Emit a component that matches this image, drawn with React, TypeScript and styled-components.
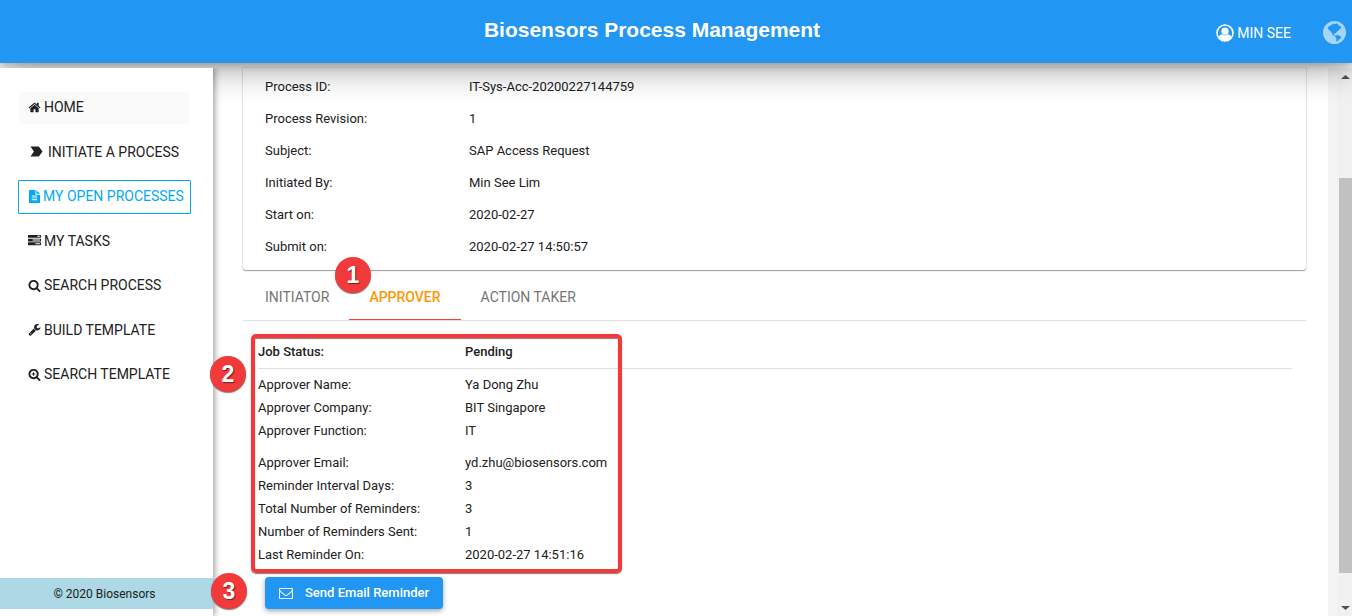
import React from "react";
import styled, { createGlobalStyle } from "styled-components";
import { MdLabelImportant } from "react-icons/md";

const arial = `"Liberation Sans", Arial, sans-serif`;
const roboto = `Roboto, "Liberation Sans", sans-serif`;

const GlobalStyle = createGlobalStyle`
  *, *::before, *::after { box-sizing: border-box; }
  body { margin: 0; background: #fff; color: #212121; font-family: ${roboto}; font-size: 13px; }
  h1, ul, dl, dd { margin: 0; padding: 0; }
`;

const Page = styled.div`
  position: relative;
  display: flex;
  flex-direction: column;
  height: 100vh;
  min-height: 616px;
  overflow: hidden;
`;

const Header = styled.header`
  position: relative;
  z-index: 1;
  flex: none;
  display: grid;
  grid-template-columns: 1fr auto 1fr;
  align-items: center;
  height: 63px;
  padding: 0 6px;
  background: #2196f3;
  color: #fff;
  box-shadow: 0 5px 34px rgba(0, 0, 0, 0.4), 0 2px 8px rgba(0, 0, 0, 0.2);
`;

const Title = styled.h1`
  grid-column: 2;
  margin-right: 48px;
  padding-bottom: 4px;
  font: bold 21px/26px ${arial};
`;

const HeaderTools = styled.div`
  display: flex;
  justify-content: flex-end;
  align-items: center;
  gap: 32px;
`;

const HeaderButton = styled.button`
  display: flex;
  align-items: center;
  gap: 3px;
  padding: 2px 0 0;
  border: 0;
  background: none;
  color: #fff;
  font: 14px/20px ${roboto};
`;

const Body = styled.div`
  flex: 1;
  display: flex;
  min-height: 0;
  padding-top: 5px;
`;

const Sidebar = styled.aside`
  position: relative;
  z-index: 2;
  flex: none;
  display: flex;
  flex-direction: column;
  justify-content: space-between;
  width: 213px;
  padding: 23px 0 7px;
  background: #fff;
  box-shadow: 2px 0 6px rgba(0, 0, 0, 0.36);
  clip-path: inset(0 -12px 0 0);
`;

const NavList = styled.ul`
  display: flex;
  flex-direction: column;
  justify-content: space-between;
  height: 301px;
  padding: 0 22px 0 18px;
  list-style: none;
`;

const NavLink = styled.a<{ $state?: "hover" | "active"; $gap: number }>`
  display: flex;
  align-items: center;
  gap: ${(p) => p.$gap}px;
  height: 34px;
  padding: 0 5px 2px 9px;
  border: 1px solid ${(p) => (p.$state === "active" ? "#03a9f4" : "transparent")};
  border-radius: 1px;
  background: ${(p) => (p.$state === "hover" ? "#fafafa" : "transparent")};
  background-clip: padding-box;
  color: ${(p) => (p.$state === "active" ? "#03a9f4" : "#212121")};
  font: 14px/20px ${roboto};
  text-decoration: none;
  white-space: nowrap;

  svg { flex: none; }
`;

const Copyright = styled.footer`
  height: 31px;
  padding: 1px 4px 0 0;
  background: #add8e6;
  font-size: 12px;
  line-height: 30px;
  text-align: center;
`;

const Main = styled.main`
  flex: 1;
  min-width: 0;
  padding: 0 22px 0 30px;
`;

const Card = styled.section`
  padding: 3px 22px 7px;
  border-radius: 0 0 3px 3px;
  box-shadow: 0 0 1px 1px rgba(0, 0, 0, 0.08), 0 1px 1px rgba(0, 0, 0, 0.35);
`;

const Details = styled.dl<{ $row: number; $label: number }>`
  display: grid;
  grid-template-columns: ${(p) => p.$label}px 1fr;
  grid-auto-rows: ${(p) => p.$row}px;
  align-items: center;
  line-height: 20px;
`;

const Tabs = styled.div`
  display: flex;
  height: 51px;
  padding-left: 2px;
  border-bottom: 1px solid #e0e0e0;
`;

const Tab = styled.button<{ $active?: boolean }>`
  padding: 5px 20px 0;
  border: 0;
  border-bottom: 1px solid ${(p) => (p.$active ? "#f44336" : "transparent")};
  background: none;
  color: ${(p) => (p.$active ? "#ff9800" : "#757575")};
  font: ${(p) => (p.$active ? 500 : 400)} 14px/20px ${roboto};
`;

const Panel = styled.section`
  padding: 15px 14px 0 15px;
`;

const Status = styled(Details)`
  height: 33px;
  border-bottom: 1px solid #e0e0e0;
  font-weight: 500;
`;

const Group = styled(Details)`
  padding-top: 4px;
  & + & { padding-top: 9px; }
`;

const SendButton = styled.button`
  display: flex;
  align-items: center;
  gap: 12px;
  height: 32px;
  margin: 11px 0 0 7px;
  padding: 0 14px;
  border: 0;
  border-radius: 4px;
  background: #2196f3;
  color: #fff;
  font: 500 13px/20px ${roboto};
  box-shadow: 0 2px 5px rgba(0, 0, 0, 0.35);
`;

const Scroller = styled.div`
  flex: none;
  display: flex;
  flex-direction: column;
  align-items: center;
  width: 24px;
  padding: 7px 0 6px 2px;
  border-left: 9px solid #f4f4f4;
  background: #f1f1f1;
`;

const ScrollThumb = styled.div`
  width: 13px;
  height: 395px;
  margin: 99px 0 auto;
  background: #c1c1c1;
`;

const Badge = styled.span<{ $x: number; $y: number }>`
  position: absolute;
  z-index: 3;
  left: ${(p) => p.$x}px;
  top: ${(p) => p.$y}px;
  width: 36px;
  height: 36px;
  border-radius: 50%;
  background: #f23a3a;
  color: #fff;
  font: bold 23px/36px ${arial};
  text-align: center;
  text-shadow: 1px 1px 1px rgba(0, 0, 0, 0.5);
  box-shadow: 0 1px 1px rgba(0, 0, 0, 0.5);
`;

const Highlight = styled.div`
  position: absolute;
  z-index: 3;
  left: 251px;
  top: 334px;
  width: 371px;
  height: 239px;
  border: 4px solid #f23a3a;
  border-radius: 5px;
  box-shadow: 0 1px 1px rgba(0, 0, 0, 0.5), inset 0 1px 1px rgba(0, 0, 0, 0.5);
  pointer-events: none;
`;

const lens =
  "M1216 832q0-185-131.5-316.5t-316.5-131.5-316.5 131.5-131.5 316.5 131.5 316.5 316.5 131.5 316.5-131.5 131.5-316.5zm512 832q0 52-38 90t-90 38q-54 0-90-38l-343-342q-179 124-399 124-143 0-273.5-55.5t-225-150-150-225-55.5-273.5 55.5-273.5 150-225 225-150 273.5-55.5 273.5 55.5 225 150 150 225 55.5 273.5q0 220-124 399l343 343q37 37 37 90z";

const paths = {
  home: "M1472 992v480q0 26-19 45t-45 19h-384v-384h-256v384h-384q-26 0-45-19t-19-45v-480q0-1 .5-3t.5-3l575-474 575 474q1 2 1 6zm223-69l-62 74q-8 9-21 11h-3q-13 0-21-7l-692-577-692 577q-12 8-24 7-13-2-21-11l-62-74q-8-10-7-23.5t11-21.5l719-599q32-26 76-26t76 26l244 204v-195q0-14 9-23t23-9h192q14 0 23 9t9 23v408l219 182q10 8 11 21.5t-7 23.5z",
  file: "M1596 476q14 14 28 36h-472v-472q22 14 36 28zm-476 164h544v1056q0 40-28 68t-68 28h-1344q-40 0-68-28t-28-68v-1600q0-40 28-68t68-28h800v544q0 40 28 68t68 28zm160 736v-64q0-14-9-23t-23-9h-704q-14 0-23 9t-9 23v64q0 14 9 23t23 9h704q14 0 23-9t9-23zm0-256v-64q0-14-9-23t-23-9h-704q-14 0-23 9t-9 23v64q0 14 9 23t23 9h704q14 0 23-9t9-23zm0-256v-64q0-14-9-23t-23-9h-704q-14 0-23 9t-9 23v64q0 14 9 23t23 9h704q14 0 23-9t9-23z",
  tasks: "M1024 1408h640v-128h-640v128zm-384-512h1024v-128h-1024v128zm640-512h384v-128h-384v128zm512 832v256q0 26-19 45t-45 19h-1664q-26 0-45-19t-19-45v-256q0-26 19-45t45-19h1664q26 0 45 19t19 45zm0-512v256q0 26-19 45t-45 19h-1664q-26 0-45-19t-19-45v-256q0-26 19-45t45-19h1664q26 0 45 19t19 45zm0-512v256q0 26-19 45t-45 19h-1664q-26 0-45-19t-19-45v-256q0-26 19-45t45-19h1664q26 0 45 19t19 45z",
  search: lens,
  searchPlus:
    lens +
    "M1024 800v64q0 13-9.5 22.5t-22.5 9.5h-160v160q0 13-9.5 22.5t-22.5 9.5h-64q-13 0-22.5-9.5t-9.5-22.5v-160h-160q-13 0-22.5-9.5t-9.5-22.5v-64q0-13 9.5-22.5t22.5-9.5h160v-160q0-13 9.5-22.5t22.5-9.5h64q13 0 22.5 9.5t9.5 22.5v160h160q13 0 22.5 9.5t9.5 22.5z",
  wrench: "M448 1472q0-26-19-45t-45-19-45 19-19 45 19 45 45 19 45-19 19-45zm644-420l-682 682q-37 37-90 37-52 0-91-37l-106-108q-38-36-38-90 0-53 38-91l681-681q39 98 114.5 173.5t173.5 114.5zm634-435q0 39-23 106-47 134-164.5 217.5t-258.5 83.5q-185 0-316.5-131.5t-131.5-316.5 131.5-316.5 316.5-131.5q58 0 121.5 16.5t107.5 46.5q16 11 16 28t-16 28l-293 169v224l193 107q5-3 79-48.5t135.5-81 70.5-35.5q15 0 23.5 10t8.5 25z",
  mail: "M1664 1504v-768q-32 36-69 66-268 206-426 338-51 43-83 67t-86.5 48.5-102.5 24.5h-2q-48 0-102.5-24.5t-86.5-48.5-83-67q-158-132-426-338-37-30-69-66v768q0 13 9.5 22.5t22.5 9.5h1472q13 0 22.5-9.5t9.5-22.5zm0-1051v-24.5l-.5-13-3-12.5-5.5-9-9-7.5-14-2.5h-1472q-13 0-22.5 9.5t-9.5 22.5q0 168 147 284 193 152 401 317 6 5 35 29.5t46 37.5 44.5 31.5 50.5 27.5 43 9h2q20 0 43-9t50.5-27.5 44.5-31.5 46-37.5 35-29.5q208-165 401-317 54-43 100.5-115.5t46.5-131.5zm128-37v1088q0 66-47 113t-113 47h-1472q-66 0-113-47t-47-113v-1088q0-66 47-113t113-47h1472q66 0 113 47t47 113z",
};

const Glyph = ({ name, size = 14 }: { name: keyof typeof paths; size?: number }) => (
  <svg width={size} height={size} viewBox="0 0 1792 1792" fill="currentColor" aria-hidden="true">
    <path d={paths[name]} fillRule={name === "file" ? "evenodd" : "nonzero"} />
  </svg>
);

const UserIcon = () => (
  <svg width="18" height="18" viewBox="0 0 18 18" aria-hidden="true">
    <circle cx="9" cy="9" r="8" fill="none" stroke="#fff" strokeWidth="1.6" />
    <circle cx="9" cy="7.200" r="3.600" fill="#fff" />
    <path d="M2.500 14c.6-2.400 1.800-3.600 3.600-3.800 1.800 1.400 4 1.400 5.800 0 1.800.2 3 1.400 3.600 3.800-3.400 4-9.600 4-13 0z" fill="#fff" />
  </svg>
);

const GlobeIcon = () => (
  <svg width="23" height="23" viewBox="0 0 22 22" fill="#fff" opacity="0.6" aria-hidden="true">
    <path
      fillRule="evenodd"
      d="M11 0a11 11 0 1 1 0 22 11 11 0 0 1 0-22zM4.500 7l.8-1.800L7.500 4l2.200-1.400 1.600.6 1.200-.9 2 .5-.2 1.300 2.200.6 1.200 2.300-1.700.4-1.200 2-1.800.8-.6 1.500-2.200.2.400 1.400 1.600.8-.8.7-2-1.500-1.800-3.300-1.800-1.200zM12.200 13.800l2-.4 3.200 1.700-.6 1.800-1.600.8-1.400 2-1.200-.4.300-2.400-1.100-1.500z"
    />
  </svg>
);

const navItems: { label: string; icon: React.ReactNode; gap: number; state?: "hover" | "active" }[] = [
  { label: "HOME", icon: <Glyph name="home" size={13} />, gap: 3, state: "hover" },
  { label: "INITIATE A PROCESS", icon: <MdLabelImportant size={17} />, gap: 3 },
  { label: "MY OPEN PROCESSES", icon: <Glyph name="file" size={13} />, gap: 2, state: "active" },
  { label: "MY TASKS", icon: <Glyph name="tasks" size={13} />, gap: 3 },
  { label: "SEARCH PROCESS", icon: <Glyph name="search" size={13} />, gap: 3 },
  { label: "BUILD TEMPLATE", icon: <Glyph name="wrench" size={13} />, gap: 3 },
  { label: "SEARCH TEMPLATE", icon: <Glyph name="searchPlus" size={13} />, gap: 3 },
];

const processRows = [
  ["Process ID:", "IT-Sys-Acc-20200227144759"],
  ["Process Revision:", "1"],
  ["Subject:", "SAP Access Request"],
  ["Initiated By:", "Min See Lim"],
  ["Start on:", "2020-02-27"],
  ["Submit on:", "2020-02-27 14:50:57"],
];

const approverRows = [
  ["Approver Name:", "Ya Dong Zhu"],
  ["Approver Company:", "BIT Singapore"],
  ["Approver Function:", "IT"],
];

const reminderRows = [
  ["Approver Email:", "yd.zhu@biosensors.com"],
  ["Reminder Interval Days:", "3"],
  ["Total Number of Reminders:", "3"],
  ["Number of Reminders Sent:", "1"],
  ["Last Reminder On:", "2020-02-27 14:51:16"],
];

const Rows = ({ rows }: { rows: string[][] }) => (
  <>
    {rows.map(([label, value]) => (
      <React.Fragment key={label}>
        <dt>{label}</dt>
        <dd>{value}</dd>
      </React.Fragment>
    ))}
  </>
);

export default function App() {
  return (
    <Page>
      <GlobalStyle />
      <Header>
        <Title>Biosensors Process Management</Title>
        <HeaderTools>
          <HeaderButton>
            <UserIcon />
            MIN SEE
          </HeaderButton>
          <HeaderButton aria-label="Language">
            <GlobeIcon />
          </HeaderButton>
        </HeaderTools>
      </Header>
      <Body>
        <Sidebar>
          <nav>
            <NavList>
              {navItems.map((item) => (
                <li key={item.label}>
                  <NavLink href="#" $state={item.state} $gap={item.gap}>
                    {item.icon}
                    {item.label}
                  </NavLink>
                </li>
              ))}
            </NavList>
          </nav>
          <Copyright>© 2020 Biosensors</Copyright>
        </Sidebar>
        <Main>
          <Card>
            <Details $row={32} $label={204}>
              <Rows rows={processRows} />
            </Details>
          </Card>
          <Tabs role="tablist">
            <Tab role="tab">INITIATOR</Tab>
            <Tab role="tab" aria-selected $active>
              APPROVER
            </Tab>
            <Tab role="tab">ACTION TAKER</Tab>
          </Tabs>
          <Panel>
            <Status $row={32} $label={207}>
              <Rows rows={[["Job Status:", "Pending"]]} />
            </Status>
            <Group $row={23} $label={207}>
              <Rows rows={approverRows} />
            </Group>
            <Group $row={23} $label={207}>
              <Rows rows={reminderRows} />
            </Group>
            <SendButton>
              <Glyph name="mail" />
              Send Email Reminder
            </SendButton>
          </Panel>
        </Main>
        <Scroller>
          <svg width="9" height="4" viewBox="0 0 9 4" fill="#505050" aria-hidden="true">
            <path d="M4.500 0 9 4H0z" />
          </svg>
          <ScrollThumb />
          <svg width="9" height="4" viewBox="0 0 9 4" fill="#505050" aria-hidden="true">
            <path d="M0 0h9L4.500 4z" />
          </svg>
        </Scroller>
      </Body>
      <Highlight />
      <Badge $x={335} $y={257}>1</Badge>
      <Badge $x={210} $y={356}>2</Badge>
      <Badge $x={211} $y={573}>3</Badge>
    </Page>
  );
}
